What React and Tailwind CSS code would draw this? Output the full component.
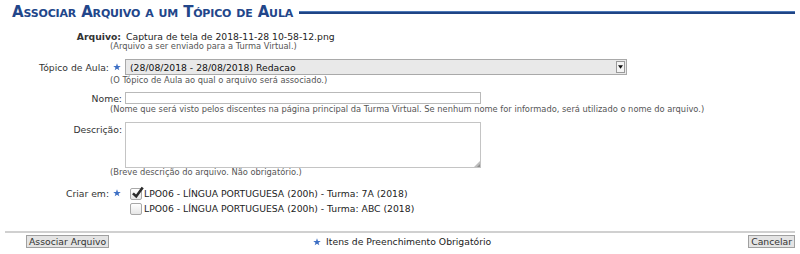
import React from "react";

const Star = () => (
  <svg viewBox="0 0 10 10" className="inline-block w-[8px] h-[8px] align-[0px]">
    <polygon
      points="5,0.3 6.2,3.6 9.7,3.7 6.9,5.8 7.9,9.2 5,7.2 2.1,9.2 3.1,5.8 0.3,3.7 3.8,3.6"
      fill="#3d6fc4"
    />
  </svg>
);

const Help = ({children}) => (
  <div className="pl-[110px] text-[8.3px] leading-[9px] text-[#555] whitespace-nowrap">{children}</div>
);

const Label = ({children, required, className = ""}) => (
  <div className={`w-[125px] shrink-0 text-right pr-[3px] text-[#333] ${className}`}>
    {children}
    {required && (
      <span className="ml-[4px] mr-[1px]">
        <Star />
      </span>
    )}
  </div>
);

const CheckBox = ({checked}) => (
  <span className="relative inline-block w-[12px] h-[12px] mr-[2px] rounded-[2px] border border-[#a8a8a8] bg-gradient-to-b from-white to-[#e6e6e6]">
    {checked && (
      <svg viewBox="0 0 12 12" className="absolute left-[0px] -top-[3px] w-[13px] h-[13px]">
        <path d="M1.8 6.8 L4.8 9.6 L10.8 1.4" stroke="#2b2b2b" strokeWidth="2.4" fill="none" />
      </svg>
    )}
  </span>
);

const App = () => {
  return (
    <div className="w-[800px] h-[254px] bg-white font-['DejaVu_Sans',sans-serif] text-[9.25px] leading-[11px] text-[#222] overflow-hidden">
      <div className="flex items-center pl-[12px] pr-[5px] pt-[3px]">
        <h2 className="font-bold text-[15px] tracking-[-0.17px] leading-[18px] text-[#22468a] [font-variant:small-caps] whitespace-nowrap">
          Associar Arquivo a um Tópico de Aula
        </h2>
        <div className="flex-1 ml-[6px] border-t border-[#4d79b8] border-b-2 border-b-[#1f4485]" />
      </div>

      <div className="mt-[10px] flex">
        <Label className="font-bold text-[#222] pr-[4px]">Arquivo:</Label>
        <div className="pl-[1px]">Captura de tela de 2018-11-28 10-58-12.png</div>
      </div>
      <Help>(Arquivo a ser enviado para a Turma Virtual.)</Help>

      <div className="mt-[8px] flex items-center">
        <Label required>Tópico de Aula:</Label>
        <div className="w-[502px] h-[16px] flex items-center justify-between border border-[#a9a9a9] bg-[#e9e9e9] pl-[4px] pr-[1px]">
          <span className="text-[#111]">(28/08/2018 - 28/08/2018) Redacao</span>
          <span className="w-[9px] h-[12px] flex items-center justify-center border border-[#9a9a9a] bg-[#f4f4f4]">
            <svg viewBox="0 0 6 4" className="w-[5px] h-[4px]">
              <polygon points="0,0 6,0 3,4" fill="#111" />
            </svg>
          </span>
        </div>
      </div>
      <div className="mt-[1px]">
        <Help>(O Tópico de Aula ao qual o arquivo será associado.)</Help>
      </div>

      <div className="mt-[7px] flex items-center">
        <Label>Nome:</Label>
        <div className="w-[356px] h-[12px] border border-[#b9b9b9] bg-white" />
      </div>
      <div className="mt-[1px]">
        <Help>
          (Nome que será visto pelos discentes na página principal da Turma Virtual. Se nenhum nome for
          informado, será utilizado o nome do arquivo.)
        </Help>
      </div>

      <div className="mt-[8px] flex items-start">
        <Label className="pt-[2px]">Descrição:</Label>
        <div className="relative w-[356px] h-[46px] border border-[#c4c4c4] bg-white">
          <svg viewBox="0 0 6 6" className="absolute right-0 bottom-0 w-[6px] h-[6px]">
            <polygon points="6,0 6,6 0,6" fill="#bdbdbd" />
            <polygon points="6,3 6,6 3,6" fill="#8f8f8f" />
          </svg>
        </div>
      </div>
      <Help>(Breve descrição do arquivo. Não obrigatório.)</Help>

      <div className="mt-[10px] flex items-start">
        <Label required className="pt-[1px]">
          Criar em:
        </Label>
        <div className="pl-[5px] flex flex-col gap-[2px]">
          <label className="flex items-center h-[13px]">
            <CheckBox checked />
            <span>LPO06 - LÍNGUA PORTUGUESA (200h) - Turma: 7A (2018)</span>
          </label>
          <label className="flex items-center h-[13px]">
            <CheckBox />
            <span>LPO06 - LÍNGUA PORTUGUESA (200h) - Turma: ABC (2018)</span>
          </label>
        </div>
      </div>

      <div className="mt-[16px] mx-[5px] border-t-2 border-[#d0d0d0] flex items-center pt-[2px]">
        <button className="ml-[21px] h-[13px] px-[2px] border border-[#a0a0a0] bg-[#e4e4e4] text-[#333] text-[9.25px] leading-[11px]">
          Associar Arquivo
        </button>
        <div className="ml-[204px] flex items-center gap-[4px] text-[#222]">
          <Star />
          <span className="ml-[1px]">Itens de Preenchimento Obrigatório</span>
        </div>
        <button className="ml-auto h-[13px] px-[2px] border border-[#a0a0a0] bg-[#e4e4e4] text-[#333] text-[9.25px] leading-[11px]">
          Cancelar
        </button>
      </div>
    </div>
  );
};

export default App;
